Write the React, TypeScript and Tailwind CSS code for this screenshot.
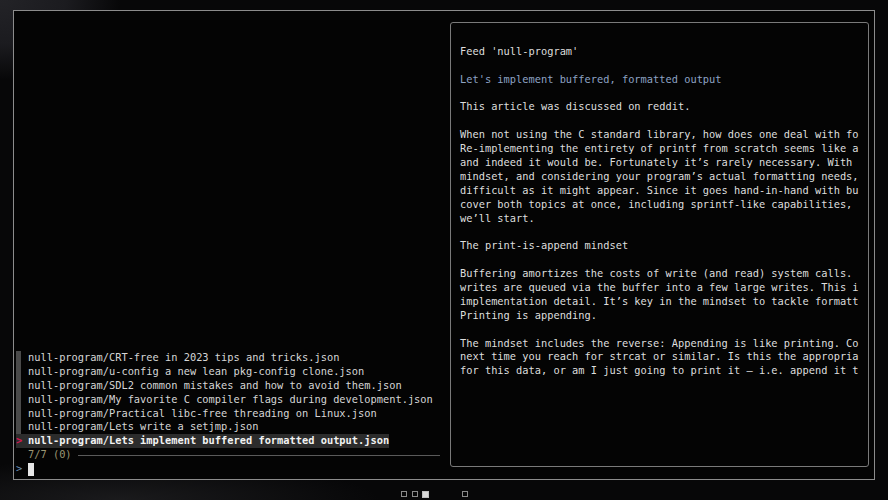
import React from "react";

const mono = { fontFamily: '"DejaVu Sans Mono", "Liberation Mono", monospace' };

const files = [
  "null-program/CRT-free in 2023 tips and tricks.json",
  "null-program/u-config a new lean pkg-config clone.json",
  "null-program/SDL2 common mistakes and how to avoid them.json",
  "null-program/My favorite C compiler flags during development.json",
  "null-program/Practical libc-free threading on Linux.json",
  "null-program/Lets write a setjmp.json",
];

const preview: { t: string; c?: string }[] = [
  { t: "" },
  { t: "Feed 'null-program'" },
  { t: "" },
  { t: "Let's implement buffered, formatted output", c: "text-[#8ea3c4]" },
  { t: "" },
  { t: "This article was discussed on reddit." },
  { t: "" },
  { t: "When not using the C standard library, how does one deal with fo" },
  { t: "Re-implementing the entirety of printf from scratch seems like a" },
  { t: "and indeed it would be. Fortunately it\u2019s rarely necessary. With" },
  { t: "mindset, and considering your program\u2019s actual formatting needs," },
  { t: "difficult as it might appear. Since it goes hand-in-hand with bu" },
  { t: "cover both topics at once, including sprintf-like capabilities," },
  { t: "we\u2019ll start." },
  { t: "" },
  { t: "The print-is-append mindset" },
  { t: "" },
  { t: "Buffering amortizes the costs of write (and read) system calls." },
  { t: "writes are queued via the buffer into a few large writes. This i" },
  { t: "implementation detail. It\u2019s key in the mindset to tackle formatt" },
  { t: "Printing is appending." },
  { t: "" },
  { t: "The mindset includes the reverse: Appending is like printing. Co" },
  { t: "next time you reach for strcat or similar. Is this the appropria" },
  { t: "for this data, or am I just going to print it \u2014 i.e. append it t" },
];

export default function App() {
  return (
    <div
      className="w-[888px] h-[500px] flex flex-col overflow-hidden bg-[#070708] bg-[radial-gradient(ellipse_120px_80px_at_0px_0px,#232327_0%,#1b1b1f_55%,transparent_100%),radial-gradient(ellipse_260px_40px_at_120px_500px,#1a1a1c_0%,transparent_100%)]"
      style={{ ...mono, fontSize: "10.35px", lineHeight: "13.9px" }}
    >
      <div className="ml-[13px] mt-[10px] w-[862px] h-[470px] border border-[#8c8c8c] bg-[#040404] flex">
        {/* left pane */}
        <div className="w-[436px] flex flex-col justify-end pb-[3px] text-[#d6d6d6]">
          {files.map((f) => (
            <div key={f} className="flex h-[13.9px]">
              <div className="w-[14px] pl-[2px] h-full">
                <div className="w-[5px] h-full bg-[#4a4a4a]" />
              </div>
              <span className="whitespace-pre">{f}</span>
            </div>
          ))}
          <div className="flex h-[13.9px]">
            <div className="flex bg-[#2c2c2c] ml-[2px]">
              <span className="w-[12px] text-[#d0174f] font-bold">&gt;</span>
              <span className="whitespace-pre font-bold text-[#f2f2f2]">
                null-program/Lets implement buffered formatted output.json
              </span>
            </div>
          </div>
          <div className="flex items-center h-[13.9px] pl-[14px] pr-[10px]">
            <span className="text-[#9b9673] whitespace-pre">7/7 (0)</span>
            <div className="flex-1 ml-[6px] h-px bg-[#5a5a5a]" />
          </div>
          <div className="flex items-center h-[13.9px]">
            <span className="w-[14px] pl-[2px] text-[#6f93b8]">&gt;</span>
            <div className="w-[6px] h-[13px] bg-[#e6e6e6]" />
          </div>
        </div>
        {/* right preview */}
        <div className="flex-1 pt-[11px] pb-[12px] pr-[5px]">
          <div className="h-full border border-[#7a7a7a] rounded-[3px] pl-[9px] pt-[8px] overflow-hidden text-[#dedede]">
            {preview.map((l, i) => (
              <div key={i} className={`h-[13.9px] whitespace-pre ${l.c ?? ""}`}>
                {l.t}
              </div>
            ))}
          </div>
        </div>
      </div>
      {/* taskbar */}
      <div className="flex items-start h-[20px] pt-[11px] pl-[401px]">
        <div className="w-[6px] h-[6px] border border-[#8a8a8a]" />
        <div className="w-[6px] h-[6px] border border-[#8a8a8a] ml-[5px]" />
        <div className="w-[7px] h-[7px] border border-[#bdbdbd] bg-[#d8d8d8] ml-[4px]" />
        <div className="w-[6px] h-[6px] border border-[#8a8a8a] ml-[33px]" />
      </div>
    </div>
  );
}
